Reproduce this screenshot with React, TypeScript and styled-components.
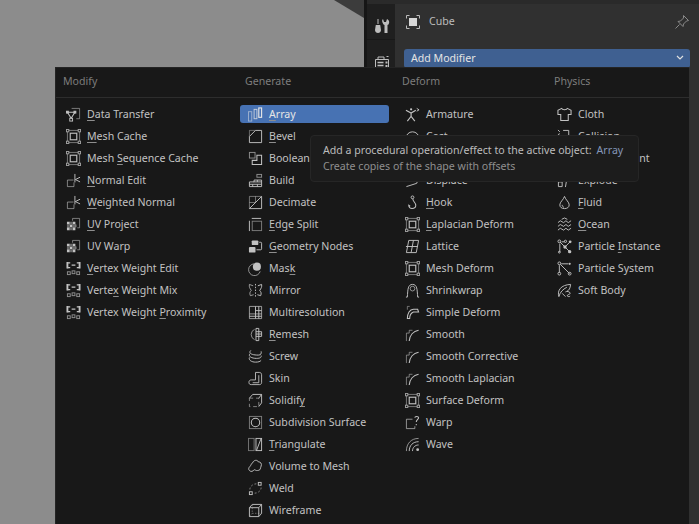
import React from "react";
import styled, { createGlobalStyle } from "styled-components";

const Global = createGlobalStyle`
  html, body { margin: 0; padding: 0; background: #303030; }
  #root { width: 699px; height: 524px; overflow: hidden; }
`;

const Page = styled.div`
  position: relative;
  width: 699px;
  height: 524px;
  overflow: hidden;
  display: grid;
  grid-template-columns: 364px 3px 28px 1fr;
  font-family: "Noto Sans", sans-serif;
  font-size: 10.6px;
  color: #c2c2c2;
`;

const Viewport = styled.div`
  position: relative;
  background: #8c8c8c;
  &::before {
    content: "";
    position: absolute;
    top: 0;
    right: 0;
    width: 30px;
    height: 18px;
    background: #3c3c3c;
    clip-path: polygon(0 0, 100% 0, 100% 100%);
  }
`;

const Divider = styled.div`
  background: #161616;
`;

const TabColumn = styled.div`
  background: #1f1f1f;
  border-top: 4px solid #2a2a2a;
  display: flex;
  flex-direction: column;
`;

const Tab = styled.div`
  height: 36px;
  padding: 8px 0 0 2px;
  display: flex;
  align-items: center;
  justify-content: center;
  border-bottom: 1px solid #181818;
  box-sizing: border-box;
  color: #bdbdbd;
`;

const Panel = styled.div`
  background: #303030;
  border-top: 4px solid #2a2a2a;
  padding: 0 9px;
  display: flex;
  flex-direction: column;
`;

const ObjectRow = styled.div`
  height: 36px;
  display: flex;
  align-items: center;
  gap: 8px;
  padding-left: 1px;
  color: #bcbcbc;
`;

const ObjectName = styled.span`
  flex: 1;
  margin-top: -2px;
`;

const AddButton = styled.div`
  margin-top: 9px;
  height: 19px;
  border-radius: 3px;
  background: #3f6091;
  color: #e4e4e4;
  padding: 0 6px 2px 7px;
  box-sizing: border-box;
  display: flex;
  align-items: center;
  justify-content: space-between;
`;

const Menu = styled.div`
  position: absolute;
  left: 55px;
  top: 67px;
  right: 10px;
  bottom: -40px;
  background: #181818;
  border-top: 1px solid #242424;
  border-left: 1px solid #242424;
  box-sizing: border-box;
  padding-left: 2px;
  display: grid;
  grid-template-columns: 174px 149px 144px 136px;
  column-gap: 8px;
  grid-template-rows: 30px 1fr;
  &::after {
    content: "";
    position: absolute;
    left: 0;
    right: 0;
    top: 29px;
    height: 1px;
    background: #2d2d2d;
  }
`;

const Heading = styled.div`
  padding-left: 5px;
  line-height: 27px;
  color: #7d7d7d;
`;

const Column = styled.div`
  padding-top: 5px;
  display: flex;
  flex-direction: column;
`;

const Row = styled.div<{ $active?: boolean }>`
  height: 18px;
  margin: 2px 0;
  display: flex;
  align-items: center;
  gap: 5px;
  padding-left: 8px;
  border-radius: 3px;
  color: ${(p) => (p.$active ? "#e6e6e6" : "#c2c2c2")};
  background: ${(p) => (p.$active ? "#4772b3" : "transparent")};
  svg { flex: none; margin-right: 1px; }
`;

const RowText = styled.span``;

const Key = styled.span`
  text-decoration: underline;
  text-underline-offset: 2px;
  text-decoration-thickness: 1px;
  text-decoration-color: #8e8e8e;
`;

const Tip = styled.div`
  position: absolute;
  left: 310px;
  top: 135px;
  width: 329px;
  height: 47px;
  box-sizing: border-box;
  background: #1c1c1c;
  border: 1px solid #262626;
  border-radius: 4px;
  padding: 6px 12px;
  line-height: 16px;
  color: #bdbdbd;
`;

const TipLine = styled.div`
  white-space: nowrap;
`;

const TipDim = styled(TipLine)`
  color: #8f8f8f;
`;

const TipName = styled.span`
  color: #8496b8;
  margin-left: 5px;
`;

const Ico = ({ children }: { children: React.ReactNode }) => (
  <svg width="15" height="15" viewBox="0 0 16 16" fill="none" stroke="currentColor" strokeWidth="1">
    {children}
  </svg>
);

const Cage = () => (
  <>
    <path d="M3 1.500h10M3 14.500h10M1.500 3v10M14.500 3v10" opacity=".6" />
    <rect x="0.500" y="0.500" width="2.500" height="2.500" opacity=".8" />
    <rect x="13" y="0.500" width="2.500" height="2.500" opacity=".8" />
    <rect x="0.500" y="13" width="2.500" height="2.500" opacity=".8" />
    <rect x="13" y="13" width="2.500" height="2.500" opacity=".8" />
    <rect x="4.500" y="4.500" width="7" height="7" strokeWidth="1.200" />
  </>
);
const NormalI = () => (
  <>
    <path d="M8 7.500H1.500v7h7V10" opacity=".65" />
    <path d="M9.500 1v9M15 4.500l-5 2.500 5 2.500" />
  </>
);
const UvI = () => (
  <>
    <path d="M7 4V1.500h7.500v10H12" opacity=".6" />
    <path
      d="M1 5h3v3H1zM7 5h3v3H7zM4 8h3v3H4zM10 8h1v3h-1zM1 11h3v3H1zM7 11h3v3H7z"
      fill="currentColor"
      stroke="none"
    />
    <path d="M4 5h3v3H4zM1 8h3v3H1zM7 8h3v3H7zM4 11h3v3H4z" fill="#6a6a6a" stroke="none" />
  </>
);
const WeightI = () => (
  <>
    <path d="M1.500 1v7M14.500 1v7" strokeWidth="2" />
    <path d="M1.500 2h3M1.500 7h3M14.500 2h-3M14.500 7h-3M6 4.500h4" strokeWidth="1.300" />
    <rect x="1.500" y="11.500" width="3" height="3" opacity=".7" />
    <rect x="6.500" y="10.500" width="3" height="3" opacity=".7" />
    <rect x="11.500" y="11.500" width="3" height="3" opacity=".7" />
  </>
);
const SmoothI = () => (
  <>
    <path d="M1.500 15V6.500h3V3.500H8" opacity=".6" />
    <path d="M4.500 15C5 9 9 4.500 14.500 3.500" strokeWidth="1.200" />
  </>
);

const icons: Record<string, React.ReactNode> = {
  data: (
    <>
      <path d="M6 1.500h8.500v11H11" opacity=".6" />
      <path d="M1.500 5.500h8L5.500 12z" strokeWidth="1.100" />
      <rect x="4" y="12" width="3" height="3" />
      <rect x="0.500" y="4.500" width="2" height="2" fill="currentColor" />
      <rect x="8.500" y="4.500" width="2" height="2" fill="currentColor" />
    </>
  ),
  cage: <Cage />,
  normal: <NormalI />,
  uv: <UvI />,
  weight: <WeightI />,
  array: (
    <>
      <rect x="0.500" y="5" width="3.500" height="10" opacity=".55" />
      <rect x="6.500" y="2.500" width="3" height="10" opacity=".8" />
      <rect x="11.500" y="1" width="3" height="10" strokeWidth="1.200" />
    </>
  ),
  bevel: (
    <>
      <path d="M1.500 8V1.500H8" opacity=".5" />
      <path d="M1.500 14.500h13v-13H8L1.500 8z" />
    </>
  ),
  boolean: (
    <>
      <rect x="1.500" y="1.500" width="6" height="6" opacity=".7" />
      <path d="M9.500 4.500h5v10h-10V10h5z" strokeWidth="1.100" />
    </>
  ),
  build: (
    <>
      <rect x="9.500" y="1.500" width="5" height="3" opacity=".7" />
      <path d="M1.500 9.500v5h13v-7H6.500v2zM1.500 12h13M6 9.500h8.500M5 12v2.500M10 7.500v2M10 12v2.500" />
    </>
  ),
  decimate: (
    <>
      <path d="M1.500 14.500v-13h13M8 1.500V8H1.500" opacity=".55" />
      <path d="M1.500 14.500h13v-13z" />
    </>
  ),
  edge: (
    <>
      <path d="M1.500 4v11M4 1.500h10" />
      <rect x="4.500" y="4.500" width="10" height="10" opacity=".6" />
    </>
  ),
  geo: (
    <>
      <rect x="1" y="8.500" width="7" height="6" rx="1" fill="currentColor" stroke="none" />
      <rect x="4" y="1.500" width="7" height="5" rx="1" fill="currentColor" stroke="none" />
      <path d="M12 3.500h1.500a1 1 0 0 1 1 1v6a1 1 0 0 1-1 1H9" />
    </>
  ),
  mask: (
    <>
      <path d="M6.500 3A6.300 6.300 0 1 0 13 11" opacity=".75" />
      <circle cx="9.500" cy="6" r="4.300" fill="currentColor" stroke="none" />
    </>
  ),
  mirror: (
    <>
      <path d="M8 1v14" strokeDasharray="1.500 1.500" />
      <path d="M5.500 3L1.500 1.500c-.5 3 .5 4 2 6.500-1.500 1.500-2 3-1 5.500l3.500-1" opacity=".8" />
      <path d="M10.500 3L14.500 1.500c.5 3-.5 4-2 6.500 1.500 1.500 2 3 1 5.500l-3.500-1" />
    </>
  ),
  multires: (
    <>
      <path d="M1.500 1.500h13v13h-13zM1.500 9.500h13" opacity=".8" />
      <path d="M8 1.500v13M11.500 1.500v13M8 6h6.500M1.500 12h13" />
    </>
  ),
  remesh: (
    <>
      <path d="M7 2.500a6 6 0 0 0 0 11" opacity=".75" />
      <path d="M8.500 1.500h3v13h-3zM8.500 5h6v5h-6M8.500 7.500h6" />
    </>
  ),
  screw: (
    <path d="M3 1.500c-3 3 1 5 8 5 3 0 3.500-2 3-4M2 5c-2 3 2 5 7 5 4 0 5.500-1 5-3M1.500 9c-1 3 2.500 5 6.500 5 3 0 5-.5 6-2" />
  ),
  skin: (
    <path d="M8 1.500h4c1.500 0 2.500 1 2.500 2.500v8.500c0 1-1 2-2 2h-9c-2 0-2.500-1-2.500-2.500s1-2.500 2.500-2.500H8zM5 12.500h6.500V4.500" opacity=".95" />
  ),
  solidify: (
    <>
      <path d="M1.500 5.500h10v9h-10z" strokeDasharray="4 3" opacity=".65" />
      <path d="M1.500 5.500l3.500-4h9.500v9l-3 4M11.500 5.500l3-4" />
    </>
  ),
  subd: (
    <>
      <rect x="1.500" y="1.500" width="13" height="13" opacity=".6" />
      <circle cx="8" cy="8" r="4.500" strokeWidth="1.100" />
    </>
  ),
  tri: (
    <>
      <rect x="0.500" y="1.500" width="6" height="13" opacity=".55" />
      <rect x="8.500" y="1.500" width="6" height="13" />
      <path d="M9 14.500l5-13" />
    </>
  ),
  volume: (
    <path d="M5 4c1-3 5-3.500 6-1 2.500 0 4 2 3 4.500s-.5 4-2.500 4.500-3 .5-4-.5-2.500 3-5 1.500S.500 9.500 2 8s1.500-3.500 3-4z" />
  ),
  weld: (
    <>
      <path d="M2 9c0-3 3-6 7-6M14 7c0 3-3 6-7 6" strokeDasharray="2 2" opacity=".65" />
      <rect x="11" y="1.500" width="3" height="3" />
      <rect x="1.500" y="11.500" width="3" height="3" />
    </>
  ),
  wire: (
    <>
      <path d="M1.500 5l3-3.500h10V11l-3 3.500h-10zM1.500 5h10v9.500M11.500 5l3-3.500" />
      <path d="M4.500 2v9h10M4.500 11l-3 3.500" opacity=".5" strokeDasharray="1.500 1.500" />
    </>
  ),
  armature: (
    <>
      <path d="M1 3.500l5.500 3 5-3M6.500 6.500V10L2.500 15M6.500 10l4 5" strokeWidth="1.200" />
      <circle cx="6.500" cy="2.500" r="1.200" fill="currentColor" stroke="none" />
      <path d="M12.500 1.500L15 3l-2.500 1.500" />
    </>
  ),
  cast: <circle cx="8" cy="10" r="7" />,
  curve: <path d="M2 14c2-8 8-4 12-12" />,
  displace: <path d="M1.500 14.500l11-3.500 2-6" />,
  hook: (
    <>
      <circle cx="8" cy="2.500" r="1.500" />
      <path d="M8.500 4c-1 2 3 4 3 7 0 2.500-2 3.500-4 3.500s-3.500-1.500-3.500-3.500l1.500 1" strokeWidth="1.100" />
    </>
  ),
  lattice: <path d="M4 1.500h10.500L12 14.500H1.500zM1 8h12.500M9 1.500l-2.500 13" />,
  shrink: (
    <>
      <path d="M1 15h1.500c.5-8 .5-13.500 5.500-13.500S13 7 13.500 15H15" />
      <circle cx="8" cy="6" r="2.500" opacity=".75" />
    </>
  ),
  simple: (
    <>
      <path d="M5 1.500H2.500V5" opacity=".55" />
      <path d="M2.500 14.500h2.500c0-4 1.500-6 4-7h5.500l-1-3H9C5 4.500 2.500 9 2.500 14.500z" strokeWidth="1.100" />
    </>
  ),
  smooth: <SmoothI />,
  warp: (
    <>
      <path d="M8 4.500H1.500v10h9V12" opacity=".75" />
      <path d="M10.500 3c0-2 4-2 4 0 0 1.500-2.500 2-2.500 4.500M12 9.500v1.500" strokeWidth="1.100" />
    </>
  ),
  wave: (
    <>
      <path d="M1.500 15c0-8 5-13.500 13-13.500" opacity=".75" />
      <path d="M4.500 15c0-6 4-10 10-10" />
      <path d="M8 15c0-4 3-6.500 6.500-6.500" />
      <circle cx="13.500" cy="13.500" r="1.500" fill="currentColor" stroke="none" />
    </>
  ),
  cloth: <path d="M5 1.500L1 3.500v4.500h3v6.500h8V8h3V3.500l-4-2c-.5 2-5.500 2-6 0z" strokeWidth="1.100" />,
  collision: <path d="M6.500 1.500h6v10M1 1l2 2M1 6l2-1" />,
  dynamic: <path d="M2 14l4-4M9 2l5 5-6 6-5-5z" />,
  explode: <path d="M1.500 9.500h4v5h-4zM9 15l1-6h4" />,
  fluid: (
    <path d="M8 1.500c1 3.500 5 6 5 9 0 2.500-2 4-5 4s-5-1.500-5-4c0-3 4-5.500 5-9zM5.500 10.500c0 1.500 1 2.500 2 2.500" />
  ),
  ocean: (
    <path d="M1 6l2.500-2L7 6l2.500-2L12 6l3-2M1 10l2.500-2L7 10l2.500-2L12 10l3-2M1 14l2.500-2L7 14l2.500-2L12 14l3-2M5 2.500l3-1.500 3 1.500" />
  ),
  pinst: (
    <>
      <path d="M3 3l5.500 5.500M3 14V5M14 3L8.500 8.500l5 5M5 3h3" />
      <circle cx="8.500" cy="8.500" r="1.800" fill="currentColor" stroke="none" />
      <circle cx="13.500" cy="13.500" r="1.800" fill="currentColor" stroke="none" />
      <circle cx="14" cy="3" r="1.500" fill="currentColor" stroke="none" />
      <circle cx="2.500" cy="2.500" r="1.500" />
      <circle cx="2.500" cy="14" r="1" />
      <circle cx="9" cy="2.500" r="1.200" />
    </>
  ),
  psys: (
    <>
      <path d="M3.500 3.500l10 10M2.500 4.500v8M4.500 3H12" />
      <circle cx="2.500" cy="2.500" r="1.500" />
      <circle cx="13.500" cy="13.500" r="1.500" />
      <circle cx="2.500" cy="13.500" r="1.500" />
      <circle cx="13.500" cy="3" r="1.200" fill="currentColor" stroke="none" />
    </>
  ),
  soft: (
    <>
      <path d="M2 14.500C0 8 4 2 14.500 1.500 14 6 13 7.500 10.500 9" />
      <path d="M2 14.500c1.500-5 4-7.500 8.500-10M5.500 11l3.500 3.500M9 9.500c1-1 5-.5 5 1.500 0 1.500-3 1-3 2.500s3 1 3 .5" />
    </>
  ),
};

type Item = { n: string; i: string; k?: number };

const cols: { title: string; items: Item[] }[] = [
  {
    title: "Modify",
    items: [
      { n: "Data Transfer", i: "data", k: 0 },
      { n: "Mesh Cache", i: "cage", k: 0 },
      { n: "Mesh Sequence Cache", i: "cage", k: 5 },
      { n: "Normal Edit", i: "normal", k: 0 },
      { n: "Weighted Normal", i: "normal", k: 0 },
      { n: "UV Project", i: "uv", k: 0 },
      { n: "UV Warp", i: "uv" },
      { n: "Vertex Weight Edit", i: "weight", k: 0 },
      { n: "Vertex Weight Mix", i: "weight", k: 5 },
      { n: "Vertex Weight Proximity", i: "weight", k: 14 },
    ],
  },
  {
    title: "Generate",
    items: [
      { n: "Array", i: "array", k: 0 },
      { n: "Bevel", i: "bevel", k: 0 },
      { n: "Boolean", i: "boolean" },
      { n: "Build", i: "build" },
      { n: "Decimate", i: "decimate" },
      { n: "Edge Split", i: "edge", k: 0 },
      { n: "Geometry Nodes", i: "geo", k: 0 },
      { n: "Mask", i: "mask", k: 3 },
      { n: "Mirror", i: "mirror" },
      { n: "Multiresolution", i: "multires" },
      { n: "Remesh", i: "remesh", k: 0 },
      { n: "Screw", i: "screw" },
      { n: "Skin", i: "skin" },
      { n: "Solidify", i: "solidify", k: 7 },
      { n: "Subdivision Surface", i: "subd" },
      { n: "Triangulate", i: "tri", k: 0 },
      { n: "Volume to Mesh", i: "volume" },
      { n: "Weld", i: "weld" },
      { n: "Wireframe", i: "wire" },
    ],
  },
  {
    title: "Deform",
    items: [
      { n: "Armature", i: "armature" },
      { n: "Cast", i: "cast" },
      { n: "Curve", i: "curve" },
      { n: "Displace", i: "displace" },
      { n: "Hook", i: "hook", k: 0 },
      { n: "Laplacian Deform", i: "cage", k: 0 },
      { n: "Lattice", i: "lattice" },
      { n: "Mesh Deform", i: "cage" },
      { n: "Shrinkwrap", i: "shrink" },
      { n: "Simple Deform", i: "simple" },
      { n: "Smooth", i: "smooth" },
      { n: "Smooth Corrective", i: "smooth" },
      { n: "Smooth Laplacian", i: "smooth" },
      { n: "Surface Deform", i: "cage" },
      { n: "Warp", i: "warp" },
      { n: "Wave", i: "wave" },
    ],
  },
  {
    title: "Physics",
    items: [
      { n: "Cloth", i: "cloth" },
      { n: "Collision", i: "collision" },
      { n: "Dynamic Paint", i: "dynamic" },
      { n: "Explode", i: "explode" },
      { n: "Fluid", i: "fluid", k: 0 },
      { n: "Ocean", i: "ocean", k: 0 },
      { n: "Particle Instance", i: "pinst", k: 9 },
      { n: "Particle System", i: "psys" },
      { n: "Soft Body", i: "soft" },
    ],
  },
];

const Label = ({ n, k }: { n: string; k?: number }) =>
  k === undefined ? (
    <RowText>{n}</RowText>
  ) : (
    <RowText>
      {n.slice(0, k)}
      <Key>{n[k]}</Key>
      {n.slice(k + 1)}
    </RowText>
  );

export default function App() {
  return (
    <Page>
      <Global />
      <Viewport />
      <Divider />
      <TabColumn>
        <Tab>
          <svg width="16" height="16" viewBox="0 0 16 16" fill="currentColor">
            <path d="M3.500 1h1v5h-1zM1.800 7h4.400l.8 5c0 2-1.500 3-3 3s-3-1-3-3z" />
            <path d="M9 1l1 3h2l1-3c2 1 3 3 1.500 5.500L13.500 7v8h-3V7l-1-.5C8 4 7.500 2 9 1z" />
          </svg>
        </Tab>
        <Tab>
          <svg width="16" height="16" viewBox="0 0 16 16" fill="none" stroke="currentColor">
            <path d="M1.500 5.500h13v9h-13zM4 5V3h6v2M12.500 2.500h2" />
            <path d="M3.500 8.500h6M3.500 11.500h6" strokeWidth="1.500" />
            <path d="M11.500 7.500h2v2h-2zM11.500 11h2v2h-2z" fill="currentColor" stroke="none" />
          </svg>
        </Tab>
      </TabColumn>
      <Panel>
        <ObjectRow>
          <svg width="16" height="16" viewBox="0 0 16 16" fill="none" stroke="currentColor">
            <path d="M1.500 4.500v-3h3M11.500 1.500h3v3M14.500 11.500v3h-3M4.500 14.500h-3v-3" />
            <rect x="4" y="4" width="8" height="8" fill="#d8d8d8" stroke="none" />
          </svg>
          <ObjectName>Cube</ObjectName>
          <svg width="16" height="16" viewBox="0 0 16 16" fill="none" stroke="#8a8a8a">
            <path d="M9.500 1.500l5 5-2 .5-3 3-.5 2.500-5-5 2.500-.5 3-3zM5.500 10.500L1.500 14.500" />
          </svg>
        </ObjectRow>
        <AddButton>
          Add Modifier
          <svg width="8" height="6" viewBox="0 0 8 6" fill="none" stroke="#e0e0e0" strokeWidth="1.200">
            <path d="M1 1l3 3 3-3" />
          </svg>
        </AddButton>
      </Panel>
      <Menu>
        {cols.map((c) => (
          <Heading key={c.title}>{c.title}</Heading>
        ))}
        {cols.map((c) => (
          <Column key={c.title}>
            {c.items.map((it) => (
              <Row key={it.n} $active={it.n === "Array"}>
                <Ico>{icons[it.i]}</Ico>
                <Label n={it.n} k={it.k} />
              </Row>
            ))}
          </Column>
        ))}
      </Menu>
      <Tip>
        <TipLine>
          Add a procedural operation/effect to the active object:
          <TipName>Array</TipName>
        </TipLine>
        <TipDim>Create copies of the shape with offsets</TipDim>
      </Tip>
    </Page>
  );
}
